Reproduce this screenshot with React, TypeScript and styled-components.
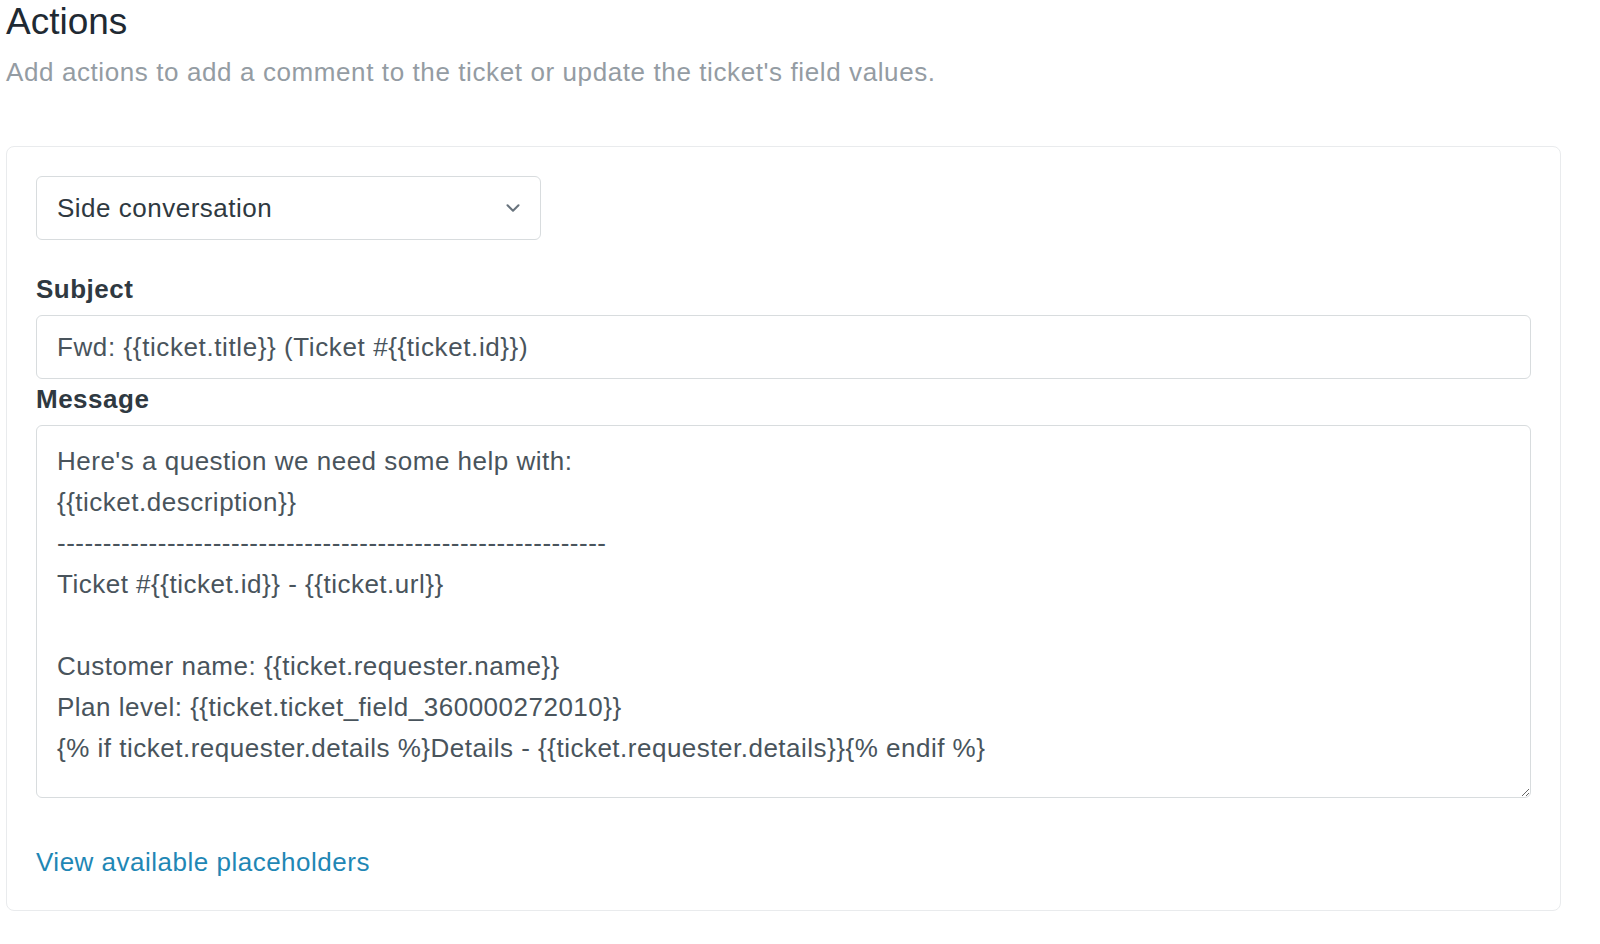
import React from "react";
import styled, { createGlobalStyle } from "styled-components";

const GlobalStyle = createGlobalStyle`
  html, body {
    margin: 0;
    padding: 0;
    background: #ffffff;
  }
  body {
    font-family: "Liberation Sans", Arial, sans-serif;
    color: #2f3941;
  }
`;

const Page = styled.div`
  padding: 0 39px 30px 6px;
`;

const Title = styled.h1`
  margin: 0;
  font-size: 37px;
  font-weight: 400;
  line-height: 44px;
  color: #1f2a33;
`;

const Subtitle = styled.p`
  margin: 8px 0 0;
  font-size: 26px;
  letter-spacing: 0.6px;
  line-height: 40px;
  color: #949ca3;
`;

const Panel = styled.section`
  margin-top: 54px;
  border: 1px solid #e9ebed;
  border-radius: 8px;
  padding: 29px 29px 30px;
  display: flex;
  flex-direction: column;
`;

const Select = styled.div`
  width: 505px;
  height: 64px;
  box-sizing: border-box;
  border: 1px solid #d8dcde;
  border-radius: 6px;
  padding: 0 16px 0 20px;
  display: flex;
  align-items: center;
  justify-content: space-between;
  font-size: 26px;
  letter-spacing: 0.5px;
  color: #2f3941;
`;

const Label = styled.label<{ $top: number }>`
  display: block;
  margin-top: ${(p) => p.$top}px;
  margin-bottom: 8px;
  font-size: 26px;
  letter-spacing: 0.5px;
  font-weight: 700;
  line-height: 36px;
  color: #2f3941;
`;

const Input = styled.div`
  height: 64px;
  box-sizing: border-box;
  border: 1px solid #d8dcde;
  border-radius: 6px;
  padding: 0 20px;
  display: flex;
  align-items: center;
  font-size: 26px;
  letter-spacing: 0.6px;
  color: #49545c;
`;

const TextArea = styled.textarea`
  display: block;
  width: 100%;
  height: 373px;
  box-sizing: border-box;
  border: 1px solid #d8dcde;
  border-radius: 6px;
  padding: 15px 20px;
  font-family: "Liberation Sans", Arial, sans-serif;
  font-size: 26px;
  letter-spacing: 0.5px;
  line-height: 41px;
  color: #49545c;
  resize: vertical;
  outline: none;
  overflow: hidden;
`;

const Link = styled.a`
  display: block;
  margin-top: 46px;
  font-size: 26px;
  letter-spacing: 0.5px;
  line-height: 36px;
  color: #1f87b5;
  text-decoration: none;
  cursor: pointer;
`;

const Chevron = () => (
  <svg width="22" height="22" viewBox="0 0 16 16" fill="none">
    <path
      d="M4 6l4 4 4-4"
      stroke="#68737d"
      strokeWidth="1.5"
      strokeLinecap="round"
      strokeLinejoin="round"
    />
  </svg>
);

const message = [
  "Here's a question we need some help with:",
  "{{ticket.description}}",
  "-".repeat(60),
  "Ticket #{{ticket.id}} - {{ticket.url}}",
  "",
  "Customer name: {{ticket.requester.name}}",
  "Plan level: {{ticket.ticket_field_360000272010}}",
  "{% if ticket.requester.details %}Details - {{ticket.requester.details}}{% endif %}",
].join("\n");

export default function App() {
  return (
    <>
      <GlobalStyle />
      <Page>
        <Title>Actions</Title>
        <Subtitle>
          Add actions to add a comment to the ticket or update the ticket's field values.
        </Subtitle>
        <Panel>
          <Select>
            <span>Side conversation</span>
            <Chevron />
          </Select>
          <Label $top={31}>Subject</Label>
          <Input>{"Fwd: {{ticket.title}} (Ticket #{{ticket.id}})"}</Input>
          <Label $top={2}>Message</Label>
          <TextArea defaultValue={message} readOnly />
          <Link>View available placeholders</Link>
        </Panel>
      </Page>
    </>
  );
}
